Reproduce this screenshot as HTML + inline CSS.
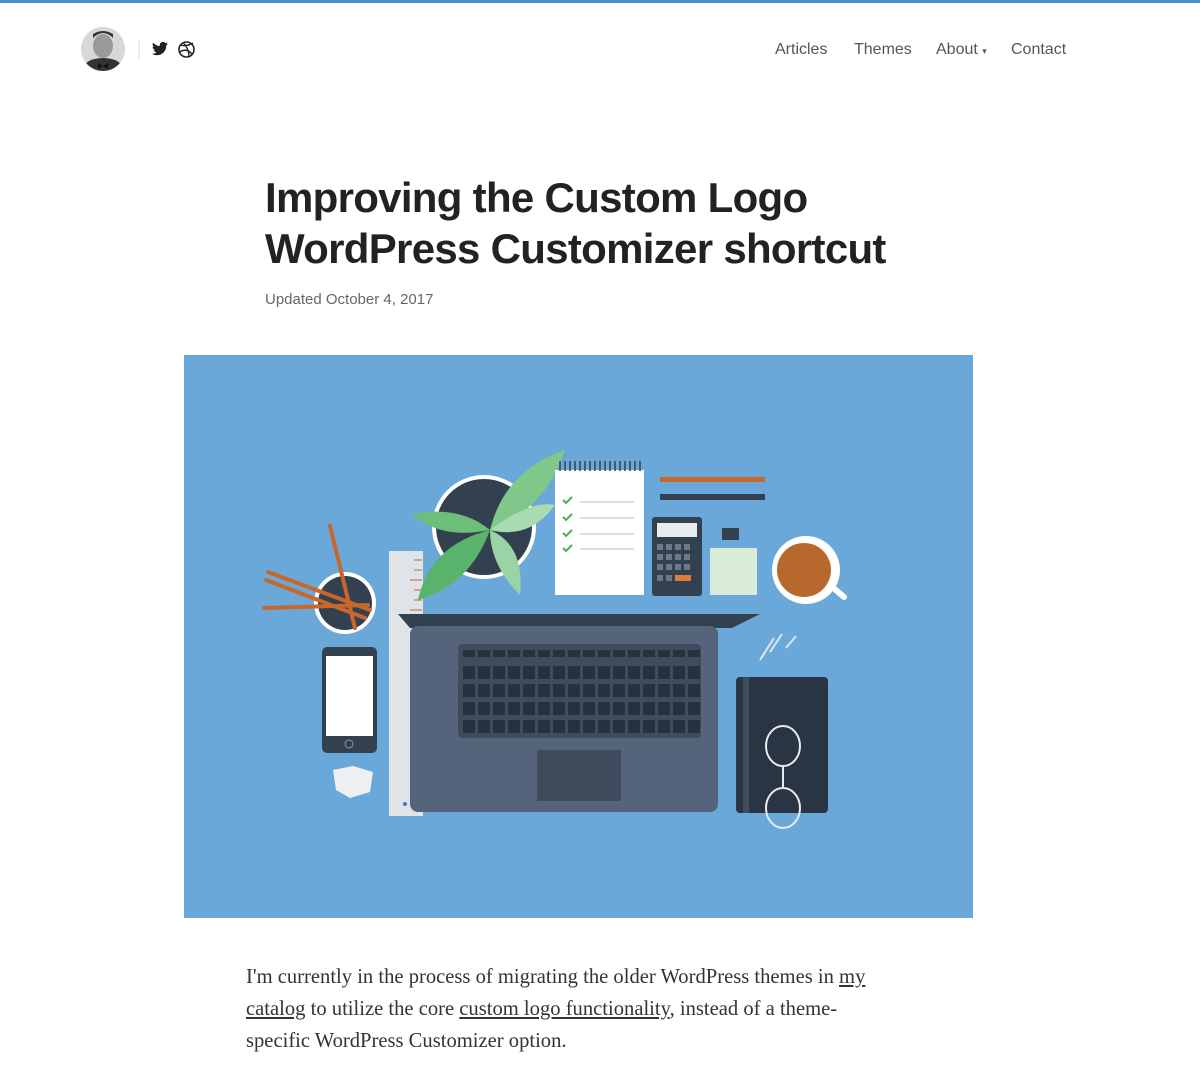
<!DOCTYPE html>
<html><head><meta charset="utf-8"><style>
*{margin:0;padding:0;box-sizing:border-box}
body{width:1200px;height:1070px;background:#fff;position:relative;overflow:hidden;font-family:"Liberation Sans",sans-serif}
.top{position:absolute;left:0;top:0;width:1200px;height:3px;background:#4a90c8}
.nav{position:absolute;top:41px;font-size:16px;color:#555}
h1{position:absolute;left:265px;top:172px;font-size:42px;line-height:51px;font-weight:bold;color:#222;letter-spacing:-0.7px;white-space:nowrap}
.date{position:absolute;left:265px;top:291px;font-size:15px;color:#666}
.body{position:absolute;left:246px;top:961px;width:632px;font-family:"Liberation Serif",serif;font-size:20.6px;line-height:32px;color:#333}
.body a{color:#333;text-decoration:underline}
</style></head><body>
<div class="top"></div>
<svg style="position:absolute;left:0;top:0" width="1200" height="100">
<defs><clipPath id="c"><circle cx="103" cy="49" r="22"/></clipPath></defs>
<circle cx="103" cy="49" r="22" fill="#ccc"/>
<g clip-path="url(#c)"><rect x="80" y="26" width="46" height="46" fill="#d8d8d8"/><ellipse cx="103" cy="46" rx="10" ry="12" fill="#9a9a9a"/><path d="M93 38q10-10 20 0v-4q-10-6-20 0z" fill="#333"/><path d="M82 72q2-14 21-14q19 0 21 14z" fill="#333"/><path d="M98 63l5 3 5-3v6l-5-3-5 3z" fill="#111"/></g>
<line x1="139" y1="40" x2="139" y2="59" stroke="#ddd" stroke-width="1"/>
<path d="M168 43.5c-.6.3-1.2.4-1.9.5.7-.4 1.2-1 1.4-1.8-.6.4-1.3.6-2.1.8a3.3 3.3 0 0 0-5.6 3c-2.7-.1-5.1-1.4-6.7-3.4-.9 1.5-.4 3.4 1 4.4-.5 0-1-.2-1.5-.4 0 1.6 1.1 3 2.6 3.3-.5.1-1 .2-1.5.1.4 1.3 1.700 2.3 3.1 2.3a6.6 6.6 0 0 1-4.9 1.4c1.5.9 3.2 1.5 5 1.5 6.1 0 9.5-5.1 9.3-9.7.7-.5 1.2-1 1.6-1.7z" fill="#222"/>
<circle cx="186.5" cy="49.5" r="7.5" fill="none" stroke="#222" stroke-width="1.6"/>
<path d="M180 45q6 2 13-2M179.5 52q8-5 13 3M183 42.5q6 6 6 14" fill="none" stroke="#222" stroke-width="1.4"/>
</svg>
<div class="nav" style="left:775px">Articles</div>
<div class="nav" style="left:854px">Themes</div>
<div class="nav" style="left:936px">About <span style="font-size:9px">▾</span></div>
<div class="nav" style="left:1011px">Contact</div>
<h1>Improving the Custom Logo<br>WordPress Customizer shortcut</h1>
<div class="date">Updated October 4, 2017</div>
<svg style="position:absolute;left:184px;top:355px" width="789" height="563" viewBox="184 355 789 563">
<defs><pattern id="k" x="463" y="666" width="15" height="18" patternUnits="userSpaceOnUse"><rect width="12" height="13" fill="#26313f"/></pattern>
<pattern id="k2" x="463" y="650" width="15" height="18" patternUnits="userSpaceOnUse"><rect width="12" height="7" fill="#26313f"/></pattern></defs>
<rect x="184" y="355" width="789" height="563" fill="#6aa8d9"/>
<circle cx="345" cy="603" r="31" fill="#fff"/><circle cx="345" cy="603" r="27" fill="#33404f"/>
<g stroke="#c8662c" stroke-width="4" stroke-linecap="round"><line x1="330" y1="526" x2="355" y2="628"/><line x1="268" y1="572" x2="370" y2="610"/><line x1="266" y1="580" x2="365" y2="618"/><line x1="264" y1="608" x2="368" y2="605"/></g>
<rect x="322" y="647" width="55" height="106" rx="5" fill="#33404f"/><rect x="326" y="656" width="47" height="80" fill="#fff"/><circle cx="349" cy="744" r="4" fill="none" stroke="#8899aa"/>
<path d="M333 770l20-4 20 6-3 20-20 6-14-8z" fill="#eef0f2"/>
<rect x="389" y="551" width="34" height="265" fill="#dfe4e8"/>
<g stroke="#c8662c" stroke-width="1"><path d="M414 560h8M414 570h8M410 580h12M414 590h8M414 600h8M410 610h12M414 620h8M414 630h8M410 640h12M414 650h8M414 660h8M410 670h12M414 680h8M414 690h8M410 700h12M414 710h8M414 720h8M410 730h12M414 740h8M414 750h8M410 760h12M414 770h8M414 780h8M410 790h12M414 800h8"/></g>
<circle cx="405" cy="804" r="2" fill="#3a7bc8"/>
<circle cx="484" cy="527" r="52" fill="#fff"/><circle cx="484" cy="527" r="48" fill="#33404f"/>
<path d="M418 600 Q430 545 490 530 Q470 585 418 600z" fill="#5ab36a"/>
<path d="M412 514 Q460 505 490 530 Q440 540 412 514z" fill="#6cbf7a"/>
<path d="M490 530 Q505 470 565 450 Q545 510 490 530z" fill="#7fc88a"/>
<path d="M490 530 Q530 500 555 505 Q530 540 490 530z" fill="#a8dbb0"/>
<path d="M490 530 Q525 545 520 595 Q490 565 490 530z" fill="#9ad4a4"/>
<rect x="555" y="470" width="89" height="125" fill="#fff"/>
<g stroke="#33404f" stroke-width="1.5"><path d="M560 461v10M565 461v10M570 461v10M575 461v10M580 461v10M585 461v10M590 461v10M595 461v10M600 461v10M605 461v10M610 461v10M615 461v10M620 461v10M625 461v10M630 461v10M635 461v10M640 461v10"/></g>
<g stroke="#4caf50" stroke-width="2" fill="none"><path d="M563 500l3 3 6-6M563 517l3 3 6-6M563 533l3 3 6-6M563 548l3 3 6-6"/></g>
<g stroke="#d8dee2" stroke-width="2"><path d="M580 502h54M580 518h54M580 534h54M580 549h54"/></g>
<rect x="660" y="477" width="105" height="5" fill="#c8662c"/><rect x="660" y="494" width="105" height="6" fill="#33404f"/>
<rect x="652" y="517" width="50" height="79" rx="3" fill="#33404f"/><rect x="657" y="523" width="40" height="14" fill="#e8ecef"/>
<g fill="#6b7a8a"><rect x="657" y="544" width="6" height="6"/><rect x="666" y="544" width="6" height="6"/><rect x="675" y="544" width="6" height="6"/><rect x="684" y="544" width="6" height="6"/><rect x="657" y="554" width="6" height="6"/><rect x="666" y="554" width="6" height="6"/><rect x="675" y="554" width="6" height="6"/><rect x="684" y="554" width="6" height="6"/><rect x="657" y="564" width="6" height="6"/><rect x="666" y="564" width="6" height="6"/><rect x="675" y="564" width="6" height="6"/><rect x="684" y="564" width="6" height="6"/><rect x="657" y="575" width="6" height="6"/><rect x="666" y="575" width="6" height="6"/></g><rect x="675" y="575" width="16" height="6" fill="#e07b39"/>
<rect x="722" y="528" width="17" height="12" fill="#33404f"/>
<rect x="710" y="548" width="47" height="47" fill="#d8ecd8"/>
<path d="M830 585l14 12" stroke="#fff" stroke-width="6" stroke-linecap="round"/>
<circle cx="806" cy="570" r="34" fill="#fff"/><circle cx="804" cy="570" r="27" fill="#b8682c"/>
<path d="M398 614h362l-28 14H410z" fill="#33404f"/>
<rect x="410" y="626" width="308" height="186" rx="8" fill="#55647a"/>
<rect x="458" y="644" width="243" height="94" rx="4" fill="#3e4c5e"/>
<rect x="463" y="650" width="237" height="7" fill="url(#k2)"/>
<rect x="463" y="666" width="237" height="67" fill="url(#k)"/>
<rect x="537" y="750" width="84" height="51" fill="#3e4c5e"/>
<g fill="none" stroke="#dfe6ec" stroke-width="2"><path d="M760 660l14-22M770 652l12-18M786 648l10-12"/></g>
<rect x="736" y="677" width="92" height="136" rx="4" fill="#2a3544"/><rect x="743" y="677" width="6" height="136" fill="#3e4c5e"/>
<g fill="none" stroke="#e8ecef" stroke-width="2"><ellipse cx="783" cy="746" rx="17" ry="20"/><ellipse cx="783" cy="808" rx="17" ry="20"/><path d="M783 766v22"/></g>
</svg>
<div class="body">I'm currently in the process of migrating the older WordPress themes in <a>my catalog</a> to utilize the core <a>custom logo functionality</a>, instead of a theme-specific WordPress Customizer option.</div>
</body></html>
